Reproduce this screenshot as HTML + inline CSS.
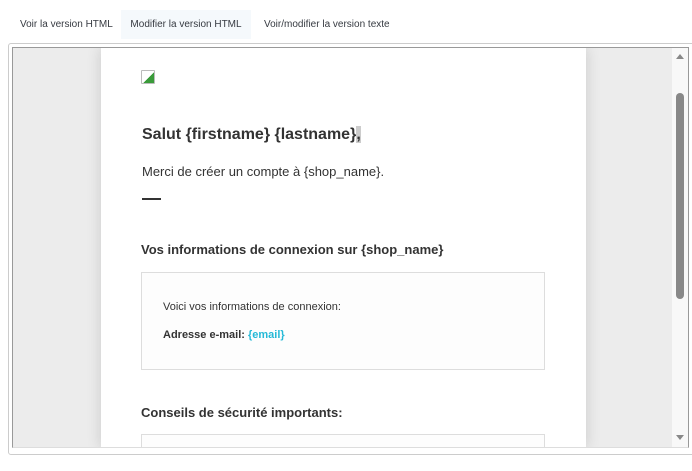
<!DOCTYPE html><html><head><style>
body{margin:0;width:692px;height:471px;background:#fff;font-family:"Liberation Sans",Arial,sans-serif;position:relative;overflow:hidden}
.tab{position:absolute;top:10px;height:29px;line-height:29px;font-size:10px;color:#363a41}
.a{position:absolute}
</style></head><body>
<div class="tab" style="left:20px">Voir la version HTML</div>
<div class="tab" style="left:121px;width:130px;background:#f5f9fc;text-align:center">Modifier la version HTML</div>
<div class="tab" style="left:264px">Voir/modifier la version texte</div>
<div class="a" style="left:8px;top:43px;width:690px;height:410px;border:1px solid #ccc;border-radius:3px"></div>
<div class="a" style="left:12px;top:47px;width:675px;height:399px;border:1px solid #999;border-bottom:1px solid #ddd;background:#ececec;overflow:hidden">
 <div class="a" style="left:88px;top:0;width:485px;height:400px;background:#fff;box-shadow:0 0 14px rgba(0,0,0,.15)">
  <div class="a" style="left:40px;top:22px;width:12px;height:12px;border:1px solid #bbb;border-radius:1px;background:linear-gradient(135deg,#fff 55%,#3a9b3a 55%)"></div>
  <div class="a" style="left:41px;top:78px;font-weight:bold;font-size:16px;color:#333">Salut {firstname} {lastname}<span style="background:#ccc">,</span></div>
  <div class="a" style="left:41px;top:116px;font-size:13px;color:#333">Merci de créer un compte à {shop_name}.</div>
  <div class="a" style="left:41px;top:150px;width:19px;height:2px;background:#333"></div>
  <div class="a" style="left:40px;top:194px;font-weight:bold;font-size:13px;color:#333">Vos informations de connexion sur {shop_name}</div>
  <div class="a" style="left:40px;top:224px;width:402px;height:96px;border:1px solid #ddd;background:#fdfdfd">
   <div class="a" style="left:21px;top:28px;font-size:11px;color:#333">Voici vos informations de connexion:</div>
   <div class="a" style="left:21px;top:56px;font-size:11px;color:#333;font-weight:bold">Adresse e-mail: <span style="color:#25b9d7">{email}</span></div>
  </div>
  <div class="a" style="left:40px;top:357px;font-weight:bold;font-size:13px;color:#333">Conseils de sécurité importants:</div>
  <div class="a" style="left:40px;top:386px;width:402px;height:96px;border:1px solid #ddd;background:#fdfdfd"></div>
 </div>
 <div class="a" style="left:659px;top:0;width:16px;height:399px;background:#f8f8f8">
  <div class="a" style="left:4px;top:6px;border:4px solid transparent;border-bottom:5px solid #888;border-top:0"></div>
  <div class="a" style="left:4px;top:45px;width:8px;height:206px;background:#888;border-radius:4px"></div>
  <div class="a" style="left:4px;top:387px;border:4px solid transparent;border-top:5px solid #888;border-bottom:0"></div>
 </div>
</div>
</body></html>
